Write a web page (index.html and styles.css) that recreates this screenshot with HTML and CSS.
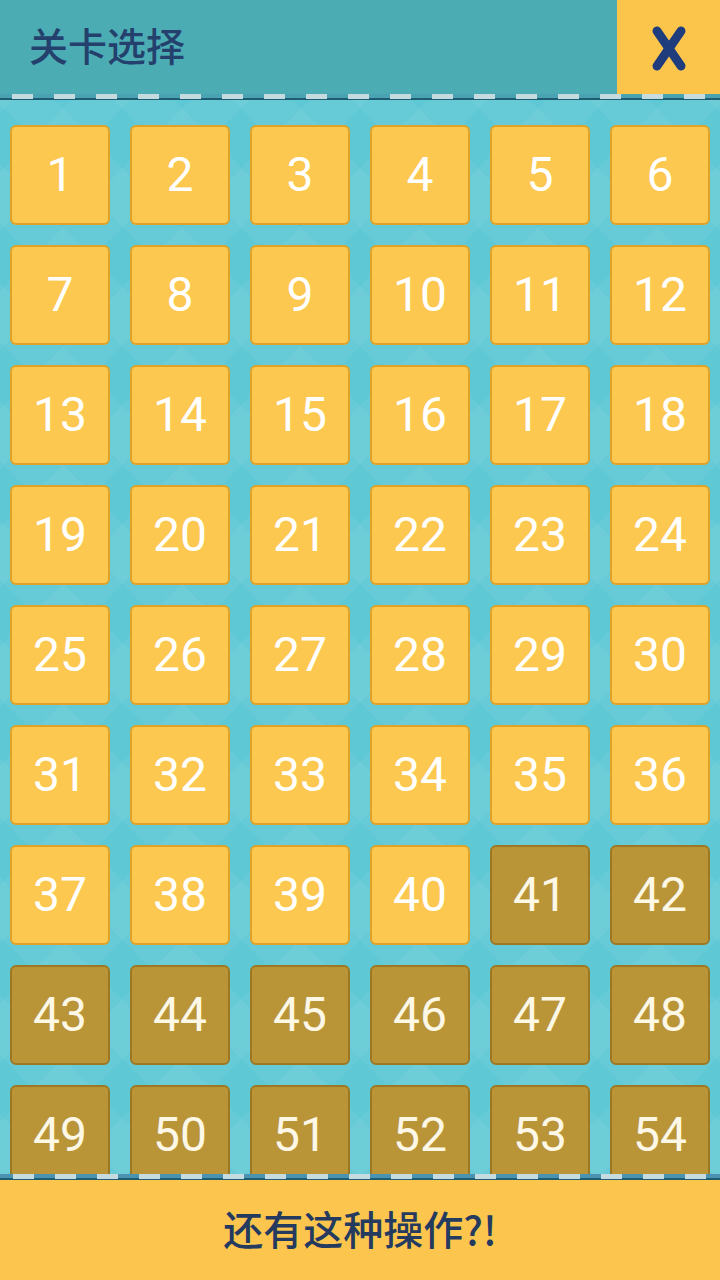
FILE: index.html
```html
<!DOCTYPE html>
<html lang="zh-CN">
<head>
    <meta charset="UTF-8">
    <meta name="viewport" content="width=device-width, initial-scale=1.0">
    <title>关卡选择</title>
    <link rel="stylesheet" href="styles.css">
</head>
<body>
    <div class="screen">
        <div class="header">
            <div class="title">关卡选择</div>
            <button class="close">
                <svg width="44" height="56" viewBox="0 0 44 56">
                    <line x1="10" y1="12" x2="34" y2="47" />
                    <line x1="34" y1="12" x2="10" y2="47" />
                </svg>
            </button>
        </div>
        <div class="dashes"></div>
        <div class="levels">
            <div class="grid" id="grid"></div>
        </div>
        <div class="dashes dashes-bottom"></div>
        <div class="footer">还有这种操作?!</div>
    </div>

    <script>
        const unlocked = 40;
        const total = 54;
        const grid = document.getElementById('grid');

        for (let i = 1; i <= total; i++) {
            const tile = document.createElement('button');
            tile.className = i <= unlocked ? 'level' : 'level locked';
            tile.textContent = i;
            grid.appendChild(tile);
        }
    </script>
</body>
</html>
```

FILE: styles.css
```css
body {
    margin: 0;
    font-family: "Noto Sans CJK SC", "Noto Sans", sans-serif;
    background-color: #5ec8d4;
}
.screen {
    width: 720px;
    height: 1280px;
    display: flex;
    flex-direction: column;
    overflow: hidden;
}
.header {
    height: 94px;
    flex: none;
    display: flex;
    align-items: center;
    justify-content: space-between;
    background-color: #4cacb4;
}
.title {
    padding-left: 29px;
    padding-bottom: 6px;
    font-size: 39px;
    font-weight: 500;
    color: #24406c;
}
.close {
    width: 103px;
    height: 94px;
    border: none;
    padding: 0;
    background-color: #fbc54b;
    display: flex;
    align-items: center;
    justify-content: center;
}
.close line {
    stroke: #1f3c7c;
    stroke-width: 9;
    stroke-linecap: round;
}
.dashes {
    height: 6px;
    flex: none;
    background:
        repeating-linear-gradient(90deg, transparent 0 12px, #c6dbe0 12px 33px, transparent 33px 42px) top / 100% 5px no-repeat,
        linear-gradient(#1e5c70, #1e5c70) bottom / 100% 2px no-repeat,
        #4aa3b2;
}
.dashes-bottom {
    background:
        repeating-linear-gradient(90deg, transparent 0 13px, #c6dbe0 13px 34px, transparent 34px 42px) top / 100% 5px no-repeat,
        linear-gradient(#1e5c70, #1e5c70) bottom / 100% 2px no-repeat,
        #4b93b3;
}
.levels {
    flex: 1;
    overflow: hidden;
    padding: 25px 10px 0;
    background-color: #5ec8d4;
    background-image:
        repeating-linear-gradient(45deg, rgba(255,255,255,0.05) 0 42px, transparent 42px 84px),
        repeating-linear-gradient(-45deg, rgba(255,255,255,0.05) 0 42px, transparent 42px 84px);
}
.grid {
    display: grid;
    grid-template-columns: repeat(6, 100px);
    gap: 20px;
}
.level {
    width: 100px;
    height: 100px;
    padding: 0;
    border: 2px solid #e0a227;
    border-radius: 6px;
    background-color: #fcc84f;
    color: white;
    font-family: Roboto, "Noto Sans", sans-serif;
    font-size: 48px;
    line-height: 1;
    cursor: pointer;
}
.locked {
    background-color: #b99538;
    border-color: #9c7823;
    color: #fdf7e6;
}
.footer {
    height: 96px;
    flex: none;
    display: flex;
    align-items: center;
    justify-content: center;
    background-color: #fcc64e;
    color: #253a5f;
    font-size: 40px;
    font-weight: 500;
    padding-bottom: 4px;
}
```
